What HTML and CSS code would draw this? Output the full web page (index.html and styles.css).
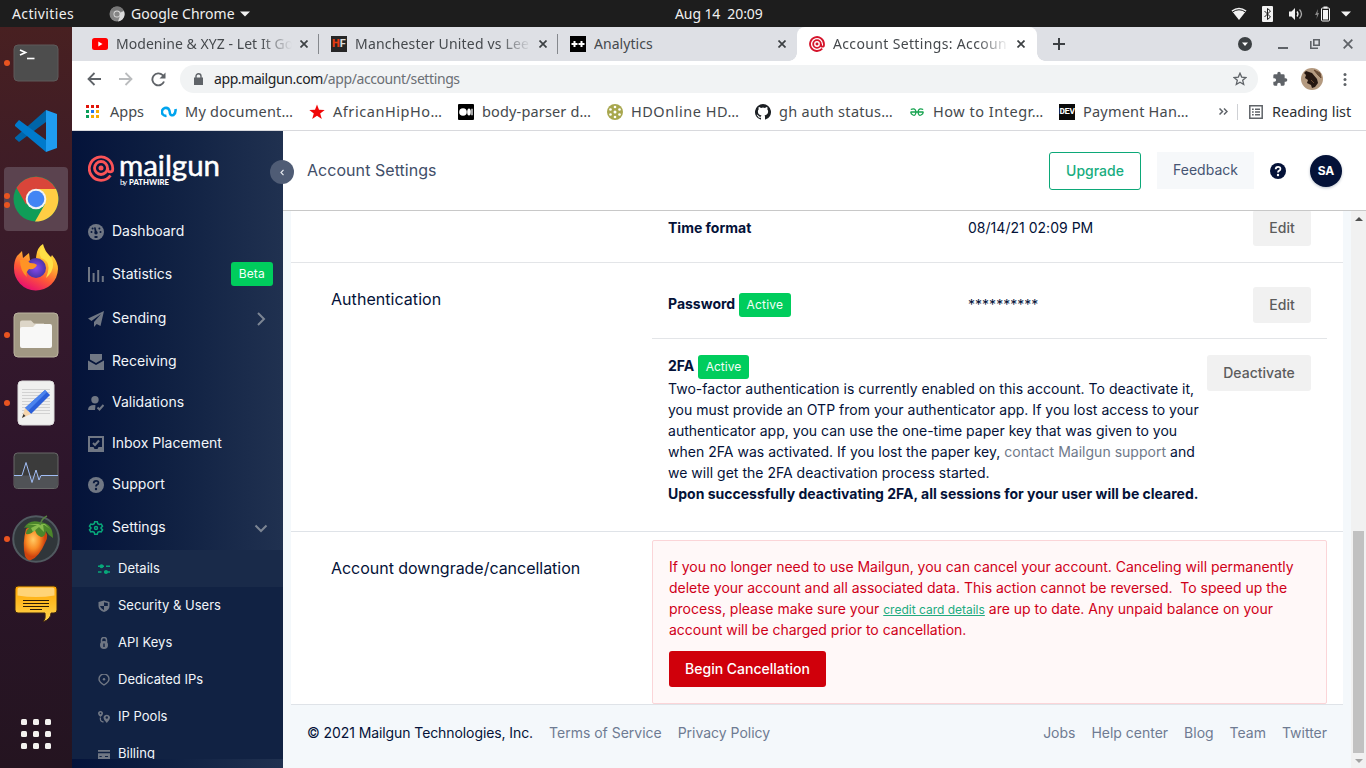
FILE: index.html
```html
<!DOCTYPE html>
<html lang="en">
<head>
<meta charset="utf-8">
<title>Account Settings</title>
<link rel="stylesheet" href="styles.css">
</head>
<body>
<div class="desktop">
<header class="topbar">
  <span class="activities">Activities</span>
  <svg class="tb-chrome" width="16" height="16" viewBox="0 0 16 16"><circle cx="8" cy="8" r="7.5" fill="#858585"/><path d="M8 8 15 5A7.5 7.5 0 0 1 9 15.4L11 10z" fill="#dcdcdc"/><path d="M1.5 4.500A7.5 7.5 0 0 1 15 5H8z" fill="#777"/><circle cx="8" cy="8" r="3.5" fill="#ddd"/><circle cx="8" cy="8" r="2.6" fill="#858585"/></svg>
  <span class="app-name">Google Chrome</span>
  <svg class="tb-caret" width="10" height="6" viewBox="0 0 10 6"><path d="M0 .5h10L5 5.500z" fill="#f2f2f2"/></svg>
  <span class="clock">Aug 14&nbsp; 20:09</span>
  <div class="tray">
    <svg width="16" height="14" viewBox="0 0 16 14"><path d="M.5 3.500Q8-2 15.500 3.500L8 13z" fill="#f2f2f2"/><path d="M1.500 5Q8 .5 14.500 5" stroke="#1d1d1d" fill="none"/></svg>
    <svg width="11" height="16" viewBox="0 0 11 16"><rect width="11" height="16" rx="1" fill="#f2f2f2"/><path d="m2.500 5 6 6-3 2.500V2.500l3 2.500-6 6" fill="none" stroke="#1d1d1d"/></svg>
    <svg width="16" height="14" viewBox="0 0 16 14"><path d="M1 4.500h2.500L7 1v12L3.500 9.500H1z" fill="#f2f2f2"/><path d="M9 4.500q2 2.500 0 5" fill="none" stroke="#f2f2f2" stroke-width="1.300"/><path d="M11.500 2.500q4 4.500 0 9" fill="none" stroke="#aaa" stroke-width="1.300"/></svg>
    <svg width="15" height="16" viewBox="0 0 15 16"><path d="M3 3 0 9h2l-.5 4L4 7H2.500z" fill="#888"/><path d="M8.500.5h4v2h-4z" fill="#f2f2f2"/><rect x="6.500" y="2" width="8" height="13" rx="1" fill="none" stroke="#f2f2f2"/><path d="M8 4h5v9.500H8z" fill="#f2f2f2"/></svg>
    <svg width="10" height="6" viewBox="0 0 10 6"><path d="M0 .5h10L5 5.500z" fill="#f2f2f2"/></svg>
  </div>
</header>

<nav class="dock">
  <div class="dock-item run"><svg width="46" height="38" viewBox="0 0 46 38"><rect x="1" y="1" width="44" height="36" rx="4" fill="#4d4d4d" stroke="#5e5a5a"/><path d="m7 6 5.500 2.500L7 11" fill="none" stroke="#fff" stroke-width="1.700"/><path d="M14 14.500h7.500" stroke="#fff" stroke-width="1.600"/></svg></div>
  <div class="dock-item"><svg width="44" height="44" viewBox="0 0 44 44"><path d="M1 28.500 32 1v12L5 33 1 29.500z" fill="#0065a9"/><path d="M1 15.500 5 11l27 20v12L1 17z" fill="#007acc"/><path d="m32 1 11 4v34l-11 4z" fill="#1f9cf0"/></svg></div>
  <div class="dock-item run two"><div class="dock-active"><svg width="46" height="46" viewBox="0 0 46 46"><circle cx="23" cy="23" r="22.500" fill="#109d58"/><path d="M23 13h20A22.500 22.500 0 0 1 22 45.500L32 28z" fill="#ffce44"/><path d="M3.500 11.800A22.500 22.500 0 0 1 43 13H23L13 28.500z" fill="#d9453a"/><circle cx="23" cy="23" r="10.300" fill="#f3f3f3"/><circle cx="23" cy="23" r="8.300" fill="#4285f4"/></svg></div></div>
  <div class="dock-item"><svg width="46" height="48" viewBox="0 0 46 48"><defs><linearGradient id="ff" x1=".8" y1="0" x2=".3" y2="1"><stop offset="0" stop-color="#fff04a"/><stop offset=".35" stop-color="#ffb52e"/><stop offset=".65" stop-color="#ff5a36"/><stop offset="1" stop-color="#e60a73"/></linearGradient><radialGradient id="fp"><stop offset="0" stop-color="#8a4af0"/><stop offset="1" stop-color="#4b35a5"/></radialGradient></defs><path d="M4 13 9 8l1 7 6-5 1 7h6q0-12 7-16 2 8 8 13l1-2q6 7 6 14A22 22 0 1 1 1 25q0-7 3-12z" fill="url(#ff)"/><circle cx="23" cy="25" r="10" fill="url(#fp)"/><path d="M7 17q6-1 10 3 5 0 7 2-2 5-8 4-4 4-2 8-7-6-7-17z" fill="#ff9425"/><path d="M28 15q12 4 5 20 10-9 6-19-6-6-10-12-4 4-1 11z" fill="#ffe146"/></svg></div>
  <div class="dock-item run"><svg width="46" height="46" viewBox="0 0 46 46"><rect x="1" y="1" width="44" height="44" rx="4" fill="#a19883" stroke="#bbb39f"/><path d="M7 10.500q0-2 2-2h9l3 3h10v8H7z" fill="#ddd6c8"/><path d="M7 17q0-2 2-2h11l3-3h14q2 0 2 2v20q0 2-2 2H9q-2 0-2-2z" fill="#f8f8f7"/></svg></div>
  <div class="dock-item run"><svg width="38" height="46" viewBox="0 0 38 46"><rect x="1" y="1" width="36" height="44" rx="4" fill="#f0f0ef" stroke="#dcdcdc"/><path d="M5 9.500h28m-28 3h28m-28 3h28m-28 3h28m-28 3h28m-28 3h28m-28 3h28m-28 3h28m-28 3h28" stroke="#d2d2d2"/><path d="M28 10 33 15 14 34 8 28z" fill="#2b5fd9"/><path d="m28 10 2 2-19 19-3-3z" fill="#4b83ee"/><path d="m8 28 6 6-9 4z" fill="#f6d5ad"/><path d="m6.500 34 2 2-3.500 2z" fill="#333"/></svg></div>
  <div class="dock-item"><svg width="46" height="38" viewBox="0 0 46 38"><rect x="1" y="1" width="44" height="35.500" rx="3.500" fill="#3b3b3b" stroke="#696969"/><path d="M1.500 23.500h43V33q0 3-3 3h-37q-3 0-3-3z" fill="#505256"/><path d="M1 23.500h8l4-13 6 20 4-12.500 3 10 2-4.500h17" fill="none" stroke="#a1bdf5"/></svg></div>
  <div class="dock-item run"><svg width="50" height="50" viewBox="0 0 50 50"><defs><radialGradient id="fl" cx=".4" cy=".4"><stop offset="0" stop-color="#ffcb66"/><stop offset=".55" stop-color="#f98d26"/><stop offset="1" stop-color="#cf440f"/></radialGradient></defs><circle cx="25" cy="25" r="22.800" fill="#30363a" stroke="#515a60" stroke-width="2"/><path d="M15 15q10-7 18 1 6 4 1 13-6 14-14 17-4 1-6-4-3-12 1-27z" fill="url(#fl)"/><path d="M13 14q5-9 16-6 13 1 13 16-5-3-7-7-1 6-5 6-6-3-6-8-3 6-9 5 0-4 3-6-4-1-5 0z" fill="#4b862b"/><path d="m16 11 12-1-8 4 2 4 6-5 5 5-1-8 7 5-5-5" fill="#87bc4d"/><path d="M29 11q2-7 7-9" fill="none" stroke="#567f42" stroke-width="1.500"/></svg></div>
  <div class="dock-item"><svg width="44" height="39" viewBox="0 0 44 39"><defs><linearGradient id="msg" x1="0" y1="0" x2="0" y2="1"><stop offset="0" stop-color="#ffa600"/><stop offset="1" stop-color="#ffd44f"/></linearGradient></defs><path d="M4 1h36q3 0 3 3v21q0 3-3 3h-3q0 6-8 9 3-3 2-9H4q-3 0-3-3V4q0-3 3-3z" fill="url(#msg)" stroke="#3c2413"/><path d="M3.500 4q0-1.500 2-1.500h33q2 0 2 1.500v6.500q-18 3-37 0z" fill="#ffd477"/><path d="M9 15.500h26m-26 3h26m-26 3h26m-19 3h12" stroke="#2c1b06"/></svg></div>
  <div class="apps-grid"><i></i><i></i><i></i><i></i><i></i><i></i><i></i><i></i><i></i></div>
</nav>

<main class="window">
  <div class="tabs">
    <div class="tab t1"><svg width="16" height="12" viewBox="0 0 16 12"><rect width="16" height="12" rx="2.500" fill="#f00"/><path d="m6.300 3.500 4.200 2.500-4.200 2.500z" fill="#fff"/></svg><span class="tab-title fade">Modenine &amp; XYZ - Let It Go</span><svg class="x" viewBox="0 0 8 8"><path d="m.5.5 7 7m0-7-7 7"/></svg></div>
    <div class="tab t2"><span class="hf"><b>H</b>F</span><span class="tab-title fade">Manchester United vs Lee</span><svg class="x" viewBox="0 0 8 8"><path d="m.5.5 7 7m0-7-7 7"/></svg></div>
    <div class="tab t3"><svg width="16" height="16" viewBox="0 0 16 16"><path d="M0 0h16v16H0z"/><path d="M1.500 8h6M4.500 5v6m4-3h6m-3-3v6" stroke="#fff" stroke-width="2"/></svg><span class="tab-title">Analytics</span><svg class="x" viewBox="0 0 8 8"><path d="m.5.5 7 7m0-7-7 7"/></svg></div>
    <div class="tab t4"><svg width="16" height="16" viewBox="0 0 26 26"><g fill="none" stroke="#d5152c" stroke-width="3"><path d="M21.500 20.500A11.300 11.300 0 1 1 24.300 13v1.500q0 2.700-2.400 2.700t-2.400-2.700V13"/><circle cx="13" cy="13" r="6.200"/></g><circle cx="13" cy="13" r="2.400" fill="#d5152c"/></svg><span class="tab-title fade">Account Settings: Accoun</span><svg class="x" viewBox="0 0 8 8"><path d="m.5.5 7 7m0-7-7 7"/></svg></div>
    <svg class="plus" width="12" height="12" viewBox="0 0 12 12"><path d="M0 6h12M6 0v12" stroke="#3c4043" stroke-width="2"/></svg>
    <div class="win-buttons">
      <svg width="14" height="14" viewBox="0 0 14 14"><circle cx="7" cy="7" r="7" fill="#3c4043"/><path d="M4 5.500h6L7 9z" fill="#fff"/></svg>
      <svg width="10" height="10" viewBox="0 0 10 10"><path d="M0 9h10" stroke="#5f6368" stroke-width="2"/></svg>
      <svg width="10" height="10" viewBox="0 0 10 10"><path d="M3.800.8h5.400v5.400H3.800z" fill="none" stroke="#5f6368" stroke-width="1.600"/><path d="M.8 2v7.200H8" fill="none" stroke="#5f6368" stroke-width="1.600"/></svg>
      <svg width="10" height="10" viewBox="0 0 10 10"><path d="m.7.7 8.600 8.600m0-8.600L.7 9.300" stroke="#5f6368" stroke-width="1.800"/></svg>
    </div>
  </div>

  <div class="toolbar">
    <svg width="14" height="14" viewBox="0 0 14 14"><path d="M14 7H1.500M7.500 1l-6 6 6 6" fill="none" stroke="#5f6368" stroke-width="1.800"/></svg>
    <svg width="14" height="14" viewBox="0 0 14 14"><path d="M0 7h12.500M6.500 1l6 6-6 6" fill="none" stroke="#babcbe" stroke-width="1.800"/></svg>
    <svg width="15" height="15" viewBox="0 0 15 15"><path d="M13 9.500A6 6 0 1 1 11.700 3.200L13.500 5" fill="none" stroke="#5f6368" stroke-width="1.900"/><path d="M14.500.5v6H8.500z" fill="#5f6368"/></svg>
    <div class="omnibox">
      <svg width="9" height="12" viewBox="0 0 9 12"><path d="M0 4.500h9V12H0z" fill="#5f6368"/><path d="M2 5V3.200a2.500 2.500 0 0 1 5 0V5" fill="none" stroke="#5f6368" stroke-width="1.400"/></svg>
      <span class="url">app.mailgun.com<i>/app/account/settings</i></span>
      <svg class="star" width="14" height="14" viewBox="0 0 14 14"><path d="m7 1.200 1.700 3.900 4.200.4-3.200 2.800 1 4.200L7 10.300l-3.700 2.200 1-4.200L1.100 5.500l4.200-.4z" fill="none" stroke="#5f6368" stroke-width="1.300"/></svg>
    </div>
    <svg class="puzzle" width="16" height="16" viewBox="0 0 24 24"><path d="M20.500 11H19V7a2 2 0 0 0-2-2h-4V3.500a2.500 2.500 0 0 0-5 0V5H4a2 2 0 0 0-2 2v3.800h1.500a2.700 2.700 0 0 1 0 5.400H2V20a2 2 0 0 0 2 2h3.800v-1.500a2.700 2.700 0 0 1 5.400 0V22H17a2 2 0 0 0 2-2v-4h1.500a2.500 2.500 0 0 0 0-5z" fill="#5f6368"/></svg>
    <svg class="photo" width="22" height="22" viewBox="0 0 22 22"><circle cx="11" cy="11" r="11" fill="#b49a80"/><path d="m5 3 6 2 5 6 1 4-3 4-3 1-1-3-4-2 1-3-3-2 1-3-2-2z" fill="#241610"/><path d="m13 2 6 3 1 5-3-3zm-3 10 3 3" fill="#65503c" stroke="#6b4a33"/></svg>
    <svg width="4" height="13" viewBox="0 0 4 13"><g fill="#5f6368"><circle cx="2" cy="1.500" r="1.500"/><circle cx="2" cy="6.500" r="1.500"/><circle cx="2" cy="11.500" r="1.500"/></g></svg>
  </div>

  <div class="bookmarks">
    <div class="bm b0"><svg width="14" height="14" viewBox="0 0 14 14"><path d="M0 0h3v3H0zM5 0h3v3H5zM10 0h3v3h-3z" fill="#e1140a"/><path d="M0 5h3v3H0zM0 10h3v3H0z" fill="#0a9d58"/><path d="M5 5h3v3H5z" fill="#2478f0"/><path d="M10 5h3v3h-3zM5 10h3v3H5zM10 10h3v3h-3z" fill="#f8ac00"/></svg><span>Apps</span></div>
    <div class="bm b1"><svg width="16" height="12" viewBox="0 0 16 12"><path d="M5.500 9.800A4 4 0 1 1 7.500 2.800Q9 4.500 9 7.500q.5 2.500 3.500 1.500 2.500-2 2-6" fill="none" stroke="#00a4ee" stroke-width="2.600"/></svg><span>My document…</span></div>
    <div class="bm b2"><svg width="16" height="16" viewBox="0 0 16 16"><path d="m8 .5 2 5.300 5.700.2-4.500 3.500 1.600 5.500L8 11.800 3.200 15l1.600-5.500L.3 6 6 5.800z" fill="#f00707"/></svg><span>AfricanHipHo…</span></div>
    <div class="bm b3"><svg width="16" height="16" viewBox="0 0 16 16"><rect width="16" height="16" rx="1"/><circle cx="5" cy="8" r="3.800" fill="#fff"/><ellipse cx="11" cy="8" rx="1.800" ry="3.600" fill="#fff"/><path d="M14 4.700v6.600" stroke="#fff" stroke-width="1.300"/></svg><span>body-parser d…</span></div>
    <div class="bm b4"><svg width="16" height="16" viewBox="0 0 16 16"><circle cx="8" cy="8" r="8" fill="#a8a74e"/><g fill="#fff"><circle cx="8" cy="8" r="1.500"/><circle cx="8" cy="3" r="1.300"/><circle cx="8" cy="13" r="1.300"/><circle cx="3.500" cy="5.500" r="1.300"/><circle cx="12.500" cy="5.500" r="1.300"/><circle cx="3.500" cy="10.500" r="1.300"/><circle cx="12.500" cy="10.500" r="1.300"/></g></svg><span>HDOnline HD…</span></div>
    <div class="bm b5"><svg width="16" height="16" viewBox="0 0 16 16"><path fill="#1b1f23" d="M8 0a8 8 0 0 0-2.500 15.600c.4.100.5-.2.500-.4v-1.500c-2 .4-2.700-.5-2.900-1-.1-.3-.6-1-1-1.200-.3-.2-.8-.7 0-.7s1.200.700 1.400 1c.8 1.300 2 1 2.500.7.100-.6.300-1 .5-1.200-1.800-.2-3.600-.9-3.600-4 0-.8.300-1.600.8-2.100-.1-.2-.4-1 .1-2.100 0 0 .7-.2 2.200.8a7.500 7.500 0 0 1 4 0c1.500-1 2.200-.8 2.200-.8.500 1.100.2 1.900.1 2.100.5.600.8 1.300.8 2.100 0 3.100-1.900 3.800-3.600 4 .3.200.5.700.5 1.500v2.400c0 .2.100.5.500.4A8 8 0 0 0 8 0z"/></svg><span>gh auth status…</span></div>
    <div class="bm b6"><svg width="14" height="8" viewBox="0 0 14 8"><path d="M.5 4h13M.8 1.500Q5.500-.5 6 4 5.500 8.300 3 7 .7 6 .8 4m12.400-2.500Q8.500-.5 8 4q.5 4.300 3 3 2.300-1 2.200-3" fill="none" stroke="#16a34f" stroke-width="1.300"/></svg><span>How to Integr…</span></div>
    <div class="bm b7"><b class="dev">DEV</b><span>Payment Han…</span></div>
    <svg class="more" width="9" height="7" viewBox="0 0 9 7"><path d="m.5.5 3 3-3 3m4.500-6 3 3-3 3" fill="none" stroke="#5f6368" stroke-width="1.500"/></svg>
    <div class="reading"><svg width="14" height="14" viewBox="0 0 14 14"><path d="M.8.8h12.400v12.400H.8z" fill="none" stroke="#5f6368" stroke-width="1.500"/><path d="M3 4.200h1.700M6 4.200h5M3 7h1.700M6 7h5M3 9.800h1.700M6 9.800h5" stroke="#5f6368" stroke-width="1.400"/></svg><span>Reading list</span></div>
  </div>

  <div class="page">
    <aside class="sidebar">
      <div class="logo">
        <svg width="134" height="38" viewBox="0 0 134 38"><g fill="none" stroke="#fa5357" stroke-width="2.800"><path d="M22.500 21.500A11.700 11.700 0 1 1 24.700 14V15.500q0 2.400-2.500 2.400T19.700 15.500v-1.500"/><circle cx="13" cy="14" r="6.500"/></g><circle cx="13" cy="14" r="2.500" fill="#fa5357"/><text class="logo-word" x="31" y="22" textLength="101" lengthAdjust="spacingAndGlyphs">mailgun</text><text class="logo-by" x="32" y="31" textLength="7">by</text><text class="logo-path" x="41" y="31" textLength="40" lengthAdjust="spacingAndGlyphs">PATHWIRE</text></svg>
      </div>
      <ul class="menu">
        <li class="m0"><svg viewBox="0 0 16 16"><circle cx="8" cy="8" r="8"/><g class="cut"><circle cx="3.500" cy="8" r="1"/><circle cx="12.500" cy="8" r="1"/><circle cx="4.600" cy="4.600" r="1"/><circle cx="11.400" cy="4.600" r="1"/><path d="M6 3.500 7.500 3.200 9 8.500l-2 .5zM6.500 12h3v2h-3z"/><circle cx="8" cy="8.700" r="1.700"/></g></svg>Dashboard</li>
        <li class="m1"><svg viewBox="0 0 16 16"><path d="M0 0h2v15H0zM4.600 6h2v9h-2zM9.200 3h2v12h-2zM13.800 9h2v6h-2z"/></svg>Statistics<span class="badge">Beta</span></li>
        <li class="m2"><svg viewBox="0 0 16 16"><path d="M16 0 0 7.500l3.500 2.500L13 3 6 11v5l2.700-3L12.500 15z"/></svg>Sending<svg class="chev" viewBox="0 0 16 16"><path d="m5 2 6 6-6 6"/></svg></li>
        <li class="m3"><svg viewBox="0 0 16 16"><path d="M2 0h12v5.500L8 9 2 5.500zM0 6.500l8 4.500 8-4.500V16H0z"/></svg>Receiving</li>
        <li class="m4"><svg viewBox="0 0 16 16"><circle cx="7" cy="4.700" r="3.700"/><path d="M0 15q0-5 6.500-5l1 .2L7 15z"/><path d="m9.500 12.500 2 2 4-4.500" class="line"/></svg>Validations</li>
        <li class="m5"><svg viewBox="0 0 16 16"><path fill-rule="evenodd" d="M0 0h16v16H0zM2 2v9h3.500l1 2h3l1-2H14V2z"/><path d="m5 7 2 2 4-4.500" class="line"/></svg>Inbox Placement</li>
        <li class="m6"><svg viewBox="0 0 16 16"><circle cx="8" cy="8" r="8"/><path d="M5.700 6.300q0-2.500 2.400-2.500t2.300 2.100q0 1.200-1.200 1.700T8 9.500" fill="none" stroke="#0a1a3d" stroke-width="1.800"/><circle cx="8" cy="12" r="1.200" class="cut"/></svg>Support</li>
        <li class="m7"><svg viewBox="0 0 16 16"><path d="m6.700 1.800h2.600l.5 1.900 1.500.8 1.900-.5 1.300 2.200-1.400 1.400v.8l1.400 1.400-1.300 2.200-1.900-.5-1.500.8-.5 1.900H6.700l-.5-1.900-1.500-.8-1.900.5-1.300-2.200 1.400-1.400v-.8L1.500 6.200 2.800 4l1.900.5 1.500-.8z" fill="none" stroke="#08a87a" stroke-width="1.500"/><circle cx="8" cy="8" r="1.500" fill="none" stroke="#08a87a" stroke-width="1.400"/></svg>Settings<svg class="chev" viewBox="0 0 16 16"><path d="m2.500 5.500 5.500 5.500 5.500-5.500"/></svg></li>
      </ul>
      <ul class="submenu">
        <li class="on"><svg viewBox="0 0 12 12"><path d="M0 3.200h6M8 3.200h4M0 9h3.500M6 9h6" stroke="#08a87a" stroke-width="1.500"/><circle cx="3.500" cy="3.200" r="2" fill="#08a87a"/><circle cx="8" cy="9" r="2" fill="#08a87a"/></svg>Details</li>
        <li><svg viewBox="0 0 12 12"><path d="M6 .5 11.500 2v4q0 4-5.500 6Q.5 10 .5 6V2z"/><path class="cut2" d="M2 6h4v4.300Q2.500 8.700 2 6zm4-3.800L9.800 3v3H6z"/></svg>Security &amp; Users</li>
        <li><svg viewBox="0 0 12 12"><path d="M3.500 5V3a2.500 2.500 0 0 1 5 0v2" fill="none" stroke="#707784" stroke-width="1.500"/><circle cx="6" cy="8" r="4"/><path class="cut2" d="M5.300 6.500h1.400v3.500H5.300z"/></svg>API Keys</li>
        <li><svg viewBox="0 0 12 12"><path d="M6 11Q1 8 1 5a5 5 0 0 1 10 0q0 3-5 6z" fill="none" stroke="#707784" stroke-width="1.400"/><circle cx="6" cy="5.200" r="1.200"/></svg>Dedicated IPs</li>
        <li><svg viewBox="0 0 12 12"><path d="M2.500 6Q0 4 0 2.500a2.500 2.500 0 0 1 5 0Q5 4 2.500 6zM8.800 12Q5.500 8.500 5.500 6.500a3.300 3.300 0 0 1 6.500 0q0 2-3.200 5.500z"/><circle class="cut2" cx="2.500" cy="2.400" r=".8"/><circle class="cut2" cx="8.800" cy="6.500" r="1.200"/><path d="M2.500 6.500Q1.500 10.500 5.500 11" fill="none" stroke="#707784" stroke-width="1.300"/></svg>IP Pools</li>
        <li><svg viewBox="0 0 12 12"><path d="M0 2h12v1.800H0zM0 5.300h12V11H0z"/><path class="cut2" d="M1.500 8h2.200v1H1.500zM7 8h3v1H7z"/></svg>Billing</li>
      </ul>
      <div class="collapse"><svg width="5" height="7" viewBox="0 0 5 7"><path d="M3.500.8 1 3.500l2.500 2.700" fill="none" stroke="#e6e9ee" stroke-width="1.200"/></svg></div>
    </aside>

    <section class="main">
      <div class="page-head">
        <h1>Account Settings</h1>
        <button class="upgrade">Upgrade</button>
        <button class="feedback">Feedback</button>
        <svg class="help" width="16" height="16" viewBox="0 0 16 16"><circle cx="8" cy="8" r="8" fill="#041238"/><path d="M5.700 6.300q0-2.500 2.400-2.500t2.300 2.100q0 1.200-1.200 1.700T8 9.500" fill="none" stroke="#fff" stroke-width="1.800"/><circle cx="8" cy="12" r="1.200" fill="#fff"/></svg>
        <span class="avatar">SA</span>
      </div>
      <div class="scroller">
        <div class="body">
          <div class="card">
            <div class="section s-time"><div></div><div class="rows"><div class="row r-time"><b>Time format</b><span class="val">08/14/21 02:09 PM</span><button class="btn">Edit</button></div></div></div>
            <div class="section s-auth"><h2>Authentication</h2><div class="rows">
              <div class="row r-pass"><b>Password <span class="badge active">Active</span></b><span class="val stars">**********</span><button class="btn">Edit</button></div>
              <div class="row r-2fa"><div class="twofa"><div class="t2head"><b>2FA</b> <span class="badge active">Active</span></div><p>Two-factor authentication is currently enabled on this account. To deactivate it,<br>you must provide an OTP from your authenticator app. If you lost access to your<br>authenticator app, you can use the one-time paper key that was given to you<br>when 2FA was activated. If you lost the paper key, <a>contact Mailgun support</a> and<br>we will get the 2FA deactivation process started.<br><b>Upon successfully deactivating 2FA, all sessions for your user will be cleared.</b></p></div><button class="btn">Deactivate</button></div>
            </div></div>
            <div class="section s-cancel"><h2>Account downgrade/cancellation</h2><div class="rows"><div class="alert"><p>If you no longer need to use Mailgun, you can cancel your account. Canceling will permanently<br><span class="wide">delete your account and all associated data. This action cannot be reversed.&nbsp; To speed up the<br>process, please make sure your <a>credit card details</a> are up to date. Any unpaid balance on your<br>account will be charged prior to cancellation.</span></p><button class="danger">Begin Cancellation</button></div></div></div>
          </div>
          <footer class="footer"><span class="copy">© 2021 Mailgun Technologies, Inc.</span><a>Terms of Service</a><a>Privacy Policy</a><span class="grow"></span><a>Jobs</a><a>Help center</a><a>Blog</a><a>Team</a><a>Twitter</a></footer>
        </div>
        <div class="scrollbar"><svg width="8" height="4" viewBox="0 0 8 4"><path d="M0 4h8L4 0z" fill="#505050"/></svg><div class="thumb"></div><svg width="8" height="4" viewBox="0 0 8 4"><path d="M0 0h8L4 4z" fill="#a3a3a3"/></svg></div>
      </div>
    </section>
  </div>
</main>
</div>
</body>
</html>
```
FILE: styles.css
```css
* { box-sizing: border-box; }
body { margin: 0; width: 1366px; height: 768px; overflow: hidden; font: 14px/21px Inter, sans-serif; color: #041238; }
svg { display: block; flex: none; }
h1, h2, p, ul { margin: 0; padding: 0; font-weight: 400; list-style: none; }
button { border: 0; padding: 0; font: inherit; }
.desktop { display: grid; grid-template: 27px 741px / 72px 1294px; }

.topbar { grid-column: 1 / 3; position: relative; background: #1d1d1d; color: #f0f0f0; display: flex; align-items: center; padding: 0 15px 0 12px; font: 14px/27px "Noto Sans", sans-serif; }
.activities { width: 97px; letter-spacing: .38px; }
.tb-chrome { margin-right: 6px; }
.app-name { width: 109px; letter-spacing: .02px; white-space: nowrap; }
.clock { position: absolute; left: 675px; letter-spacing: -.1px; }
.tray { margin-left: auto; display: flex; align-items: center; gap: 15px; }
.tray svg:nth-child(-n+3) { transform: translateX(1px); }
.tray svg:nth-child(4) { margin-left: -3px; }
.tray svg:nth-child(5) { margin-left: -4px; }

.dock { background: linear-gradient(#482021 0, #35192c 38%, #2d152b 60%, #241420 100%); display: flex; flex-direction: column; padding-top: 2px; }
.dock-item { height: 68px; display: flex; align-items: center; justify-content: center; position: relative; flex: none; }
.dock-item:nth-child(9) { height: 62px; }
.dock-item.run::before { content: ""; position: absolute; left: 4px; top: 31px; width: 6px; height: 6px; border-radius: 50%; background: #e95420; }
.dock-item.two::before { top: 28px; box-shadow: 0 9px #e95420; z-index: 1; }
.dock-active { width: 64px; height: 64px; border-radius: 4px; background: #5b434f; display: flex; align-items: center; justify-content: center; }
.apps-grid { margin: 84px 0 0 21px; display: grid; grid-template-columns: repeat(3, 6px); grid-auto-rows: 6px; gap: 6px; }
.apps-grid i { background: #f3f1ef; border-radius: 1.500px; }

.window { display: grid; grid-template-rows: 34px 36px 34px 637px; background: #fff; }
.tabs { background: #dee0e5; display: flex; align-items: center; font: 14px/34px "Noto Sans", sans-serif; color: #45494d; }
.tab { height: 34px; display: flex; align-items: center; gap: 8px; position: relative; flex: none; }
.t1 { width: 247px; padding: 0 9px 0 20px; }
.t2 { width: 239px; padding: 0 9px 0 12px; }
.t3 { width: 239px; padding: 0 9px 0 12px; }
.t4 { width: 240px; padding: 0 10px 0 12px; background: #fff; border-radius: 8px 8px 0 0; }
.t4::before, .t4::after { content: ""; position: absolute; bottom: 0; width: 8px; height: 8px; }
.t4::before { left: -8px; background: radial-gradient(circle at 0 0, transparent 7.500px, #fff 8px); }
.t4::after { right: -8px; background: radial-gradient(circle at 100% 0, transparent 7.500px, #fff 8px); }
.t1::after, .t2::after { content: ""; position: absolute; right: 0; top: 7px; width: 1px; height: 20px; background: #85888d; }
.tab-title { flex: 1; white-space: nowrap; overflow: hidden; letter-spacing: .05px; }
.t2 .tab-title { letter-spacing: .18px; }
.t4 .tab-title { letter-spacing: .35px; }
.fade { -webkit-mask-image: linear-gradient(90deg, #000 calc(100% - 32px), transparent); mask-image: linear-gradient(90deg, #000 calc(100% - 32px), transparent); }
.x { width: 8px; height: 8px; fill: none; stroke: #3c4043; stroke-width: 1.700; margin-right: 2px; }
.hf { width: 16px; height: 16px; background: #262626; color: #ddd; font: bold 11px/16px Roboto, sans-serif; text-align: center; flex: none; }
.hf b { color: #e23b10; }
.plus { margin-left: 16px; }
.win-buttons { margin-left: auto; padding-right: 13px; display: flex; align-items: center; gap: 26px; }
.win-buttons svg:nth-child(3) { margin-left: -4px; }
.win-buttons svg:nth-child(4) { margin-left: -3px; }

.toolbar { display: flex; align-items: center; padding: 0 19px 0 15px; }
.toolbar > svg:nth-child(2) { margin-left: 18px; }
.toolbar > svg:nth-child(3) { margin-left: 18px; }
.omnibox { margin-left: 14px; width: 1078px; height: 28px; border-radius: 14px; background: #f1f3f4; display: flex; align-items: center; padding: 0 11px 0 14px; }
.url { margin-left: 11px; font: 14px/28px "Noto Sans", sans-serif; color: #202124; letter-spacing: -.4px; }
.url i { font-style: normal; color: #6b6f74; }
.star { margin-left: auto; }
.puzzle { margin-left: 14px; }
.photo { margin: 0 20px 0 13px; }

.bookmarks { border-bottom: 1px solid #d8d9dd; display: flex; align-items: center; padding: 0 14px 4px; font: 14.500px/28px "Noto Sans", sans-serif; color: #45494d; }
.bm { display: flex; align-items: center; white-space: nowrap; flex: none; }
.bm > :first-child { margin-right: 8px; }
.bm > span, .reading span { margin-top: -1px; }
.b0 { width: 75px; } .b0 > :first-child { margin-right: 10px; }
.b1 { width: 148px; letter-spacing: .25px; } .b2 { width: 149px; letter-spacing: .55px; } .b3 { width: 149px; letter-spacing: .15px; } .b4 { width: 148px; letter-spacing: .52px; } .b5 { width: 155px; letter-spacing: .3px; } .b6 { width: 149px; letter-spacing: .52px; } .b7 { width: 160px; letter-spacing: .2px; }
.b6 > :first-child { margin-right: 9px; }
.dev { width: 16px; height: 16px; background: #0a0a0a; color: #fff; font: 700 9px/16px "Liberation Mono", monospace; letter-spacing: -.4px; text-align: center; }
.reading { margin-left: 9px; border-left: 1px solid #cfd1d5; height: 16px; padding-left: 11px; display: flex; align-items: center; gap: 9px; white-space: nowrap; color: #2c2f33; }

.page { display: grid; grid-template-columns: 211px 1083px; height: 637px; }
.sidebar { position: relative; background: linear-gradient(90deg, #04133a 0, #0f2042 45%, #203150 100%); color: #f2f6fa; height: 637px; }
.logo { height: 79px; padding: 23px 0 0 16px; }
.logo-word { font: 400 29px Lato, sans-serif; fill: #fff; stroke: #fff; stroke-width: .5px; }
.logo-by { font: 8px Lato, sans-serif; fill: #fff; }
.logo-path { font: 900 7.500px Lato, sans-serif; fill: #fff; }
.menu li { display: flex; align-items: center; padding: 0 14px 2px 16px; height: 42px; }
.menu svg { width: 16px; height: 16px; fill: #707784; margin: 4px 8px 0 0; }
.menu .m1, .menu .m2 { height: 44px; }
.menu .m4, .menu .m6 { height: 40px; }
.menu .m7 { height: 46px; }
.menu .cut { fill: #0a1a3d; }
.menu .line { fill: none; stroke: #707784; stroke-width: 2; }
.menu .chev { fill: none; stroke: #7c8593; stroke-width: 2; margin: 4px 0 0 auto; }
.badge { background: #00cd5d; color: #f4fff8; border-radius: 3px; font: 12px/24px Inter, sans-serif; padding: 0 8px; height: 24px; display: inline-block; letter-spacing: .2px; }
.menu .badge { margin: 2px -4px 0 auto; }
.submenu { height: 209px; overflow: hidden; background: #112243; font-size: 13px; letter-spacing: .02px; }
.submenu li { height: 37px; display: flex; align-items: center; padding-left: 26px; }
.submenu svg { width: 12px; height: 12px; fill: #707784; margin: 1px 8px 0 0; }
.submenu .cut2 { fill: #112243; }
.submenu .on { background: #192a49; }
.collapse { position: absolute; left: 198px; top: 29px; width: 24px; height: 24px; border-radius: 50%; background: #4f5c75; display: flex; align-items: center; justify-content: center; z-index: 2; }

.main { display: grid; grid-template-rows: 80px 557px; }
.page-head { border-bottom: 1px solid #c8c8c8; display: flex; align-items: center; padding: 0 24px; }
.page-head h1 { font-size: 16px; letter-spacing: .05px; color: #414e68; flex: 1; }
.upgrade { width: 92px; height: 38px; border: 1px solid #0ca878; border-radius: 3px; background: #fff; color: #18ad80; margin-right: 16px; font-weight: 500; }
.feedback { width: 97px; height: 37px; background: #f6f8fa; color: #465573; margin-right: 16px; padding-bottom: 2px; }
.help { margin-right: 24px; }
.avatar { width: 32px; height: 32px; border-radius: 50%; background: #041238; color: #fff; font: 700 12px/32px Inter, sans-serif; text-align: center; box-shadow: 0 1px 3px #b9c0ca; }
.scroller { display: grid; grid-template-columns: 1068px 15px; overflow: hidden; background: #f4f8fb; }
.body { padding: 0 8px; }
.card { background: #fff; border-bottom: 1px solid #dfe3e8; height: 494px; }
.section { display: grid; grid-template-columns: 361px 675px; }
h2 { padding-left: 40px; font-size: 16px; }
.s-time { height: 52px; border-bottom: 1px solid #e3e5e8; }
.s-auth { height: 269px; border-bottom: 1px solid #dfe3e8; }
.s-auth h2 { padding-top: 26px; letter-spacing: .05px; }
.row { display: flex; padding: 0 16px; }
.r-time b, .r-pass b { width: 300px; }
.val { flex: 1; letter-spacing: .02px; }
.btn { height: 36px; padding: 0 16px; min-width: 58px; background: #f1f1f1; color: #5c5c5c; border-radius: 3px; font-weight: 500; flex: none; }
.r-time { padding-top: 6px; }
.r-time .btn { margin-top: -7px; padding-bottom: 1px; }
.r-pass { height: 76px; border-bottom: 1px solid #e3e5e8; align-items: center; padding-top: 8px; }
.r-2fa { justify-content: space-between; padding-top: 16px; }
.r-2fa .btn { width: 104px; padding: 0 0 1px; }
.twofa { width: 532px; white-space: nowrap; }
.t2head { height: 24px; display: flex; gap: 4px; }
.t2head .badge { letter-spacing: 0; padding: 0 7.500px; }
.active { font-weight: 400; }
.r-2fa a { color: #6f7989; }
.r-2fa p { margin-top: -1px; letter-spacing: .02px; }
.r-2fa p b { letter-spacing: 0; }
.s-cancel h2 { padding-top: 26px; letter-spacing: -.03px; }
.alert { margin-top: 8px; height: 164px; background: #fff8f8; border: 1px solid #fbd5d8; border-radius: 2px; padding: 15px 16px; color: #cf0018; white-space: nowrap; letter-spacing: -.03px; }
.alert .wide { letter-spacing: -.005px; }
.alert a { font-size: 12px; line-height: 1; color: #22ab80; text-decoration: underline; }
.danger { display: block; margin-top: 11px; padding-bottom: 1px; width: 157px; height: 36px; background: #d0000b; color: #fff; border-radius: 3px; font-weight: 500; }
.footer { display: flex; gap: 16px; padding: 17px 16px; color: #6e7b92; letter-spacing: -.01px; }
.footer .copy { color: #041238; letter-spacing: -.09px; }
.grow { flex: 1; margin: 0 -16px 0 0; }
.scrollbar { background: #f1f1f1; display: flex; flex-direction: column; align-items: center; justify-content: space-between; padding: 6px 0 5px; }
.thumb { width: 11px; height: 222px; background: #c1c1c1; margin-top: auto; margin-bottom: 6px; }
```
